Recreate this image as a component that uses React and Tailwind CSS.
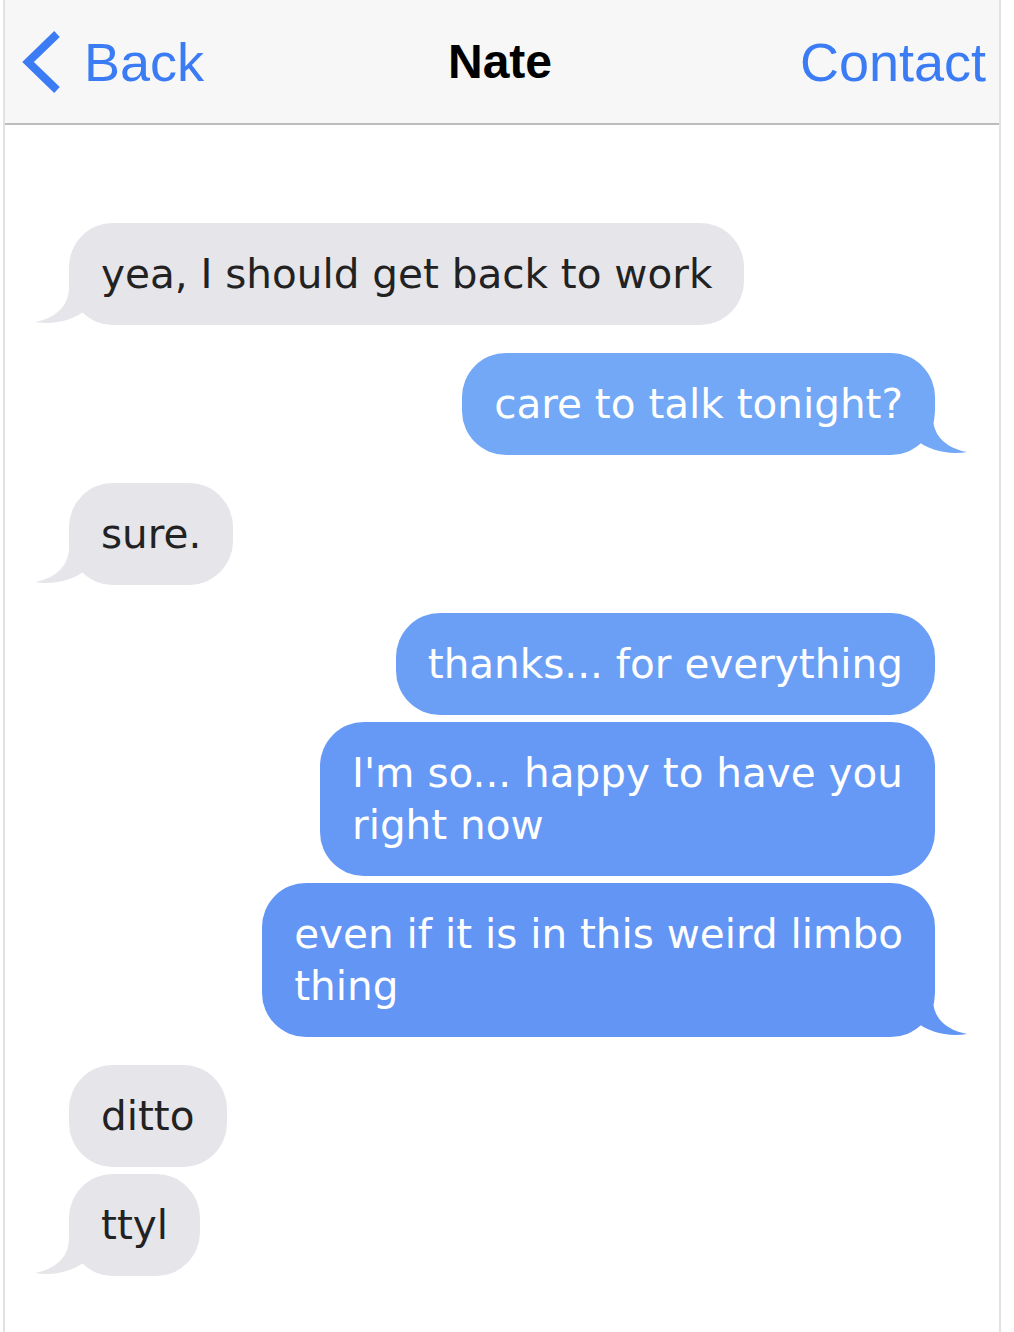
import React from "react";

const BLUE_TEXT = "text-[#3b7cf5]";

const messages = [
  { from: "them", lines: ["yea, I should get back to work"], tail: true },
  { from: "me", lines: ["care to talk tonight?"], tail: true, color: "#72a8f6", gap: "mt-7" },
  { from: "them", lines: ["sure."], tail: true, gap: "mt-7" },
  { from: "me", lines: ["thanks... for everything"], color: "#6b9ff6", gap: "mt-7" },
  { from: "me", lines: ["I'm so... happy to have you", "right now"], color: "#6699f5", gap: "mt-[7px]" },
  { from: "me", lines: ["even if it is in this weird limbo", "thing"], tail: true, color: "#6395f5", gap: "mt-[7px]" },
  { from: "them", lines: ["ditto"], gap: "mt-7" },
  { from: "them", lines: ["ttyl"], tail: true, gap: "mt-[7px]" },
];

// little curled tail that hangs off the bottom corner of a bubble
function Tail({ side, color }) {
  const pos = side === "left" ? "-left-[34px]" : "-right-[32px] -scale-x-100";
  return (
    <svg
      className={`absolute bottom-0 ${pos}`}
      width="66"
      height="60"
      viewBox="0 0 66 60"
    >
      <path
        d="M34 0 L34 22 C34 42 20 53 0 57 C18 60 38 56 52 44 L60 20 Z"
        fill={color}
      />
    </svg>
  );
}

function Bubble({ msg }) {
  const mine = msg.from === "me";
  const color = mine ? msg.color : "#e5e5ea";
  return (
    <div className={`flex ${mine ? "justify-end" : "justify-start"} ${msg.gap || ""}`}>
      <div
        className={`relative rounded-[44px] px-8 py-[25px] text-[40.5px] leading-[52px] ${
          mine ? "text-white" : "text-[#222]"
        }`}
        style={{ backgroundColor: color, fontFamily: "'DejaVu Sans', Verdana, sans-serif" }}
      >
        {msg.tail && <Tail side={mine ? "right" : "left"} color={color} />}
        <span className="relative whitespace-nowrap">
          {msg.lines.map((l, i) => (
            <React.Fragment key={i}>
              {i > 0 && <br />}
              {l}
            </React.Fragment>
          ))}
        </span>
      </div>
    </div>
  );
}

export default function App() {
  return (
    <div className="min-h-[1332px] w-full bg-white">
      <div className="ml-[3px] w-[998px] min-h-[1332px] border-x-2 border-[#e2e2e2] bg-white font-['Liberation_Sans',Arial,sans-serif]">
        <header className="grid h-[125px] grid-cols-[1fr_auto_1fr] items-center border-b-2 border-[#bdbdbd] bg-[#f7f7f7] pl-[17px] pr-[13px]">
          <button className={`flex items-center gap-[22px] justify-self-start ${BLUE_TEXT}`}>
            <svg width="40" height="64" viewBox="0 0 40 64" className="shrink-0">
              <polyline
                points="35,4 6,32 35,60"
                fill="none"
                stroke="#3b7cf5"
                strokeWidth="8"
                strokeLinejoin="miter"
              />
            </svg>
            <span className="text-[54px] leading-none">Back</span>
          </button>
          <h1 className="mr-[8px] text-[48px] font-bold leading-none text-black">Nate</h1>
          <button className={`justify-self-end text-[54px] leading-none ${BLUE_TEXT}`}>
            Contact
          </button>
        </header>

        <main className="px-16 pt-[98px] pb-12">
          {messages.map((m, i) => (
            <Bubble key={i} msg={m} />
          ))}
        </main>
      </div>
    </div>
  );
}
